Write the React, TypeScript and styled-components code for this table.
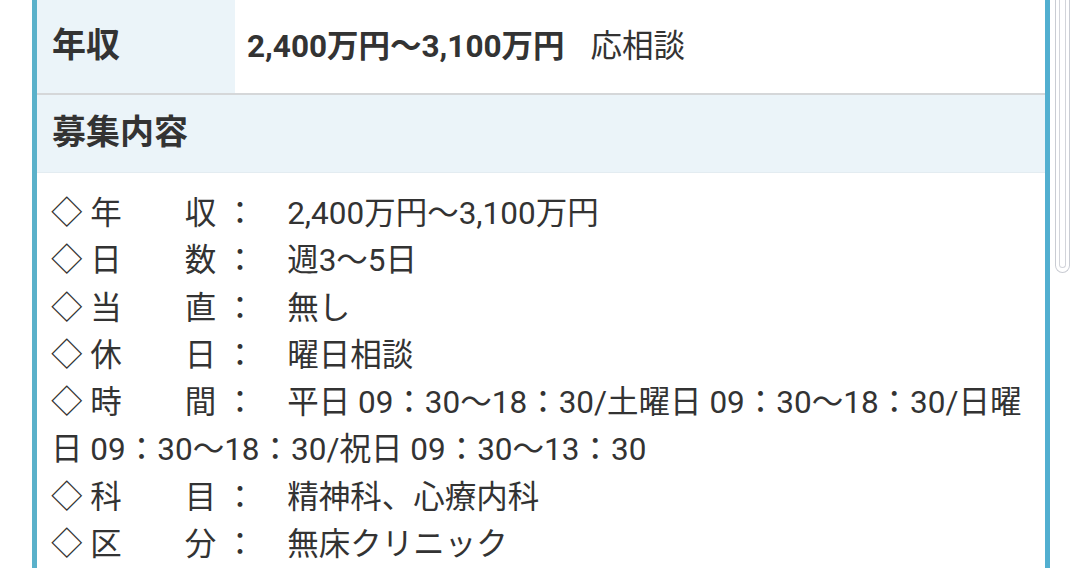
import React from "react";
import styled, { createGlobalStyle } from "styled-components";

const Global = createGlobalStyle`
  html, body { margin: 0; padding: 0; background: #ffffff; overflow: hidden; }
  body { font-family: Roboto, "Noto Sans CJK JP", sans-serif; color: #333333; }
`;

const Page = styled.div`
  position: relative;
  width: 1080px;
  height: 573px;
  overflow: hidden;
  padding-left: 32px;
  box-sizing: border-box;
`;

const Table = styled.div`
  width: 1018px;
  border-left: 5px solid #5ab1ca;
  border-right: 5px solid #52afd0;
  box-sizing: border-box;
  display: flex;
  flex-direction: column;
`;

const Row = styled.div<{ $h?: number; $line?: boolean }>`
  display: grid;
  grid-template-columns: 198px 1fr;
  border-bottom: ${(p) => (p.$line ? "2px solid #d5d7d9" : "none")};
  ${(p) => (p.$h ? `height: ${p.$h}px;` : "")}
`;

const Th = styled.div`
  background: #ebf4f9;
  font-weight: 700;
  font-size: 34px;
  line-height: 1.5;
  padding: 12px 15px 0;
  box-sizing: border-box;
`;

const Td = styled.div`
  background: #ffffff;
  font-size: 31.5px;
  line-height: 1.5;
  padding: 15px 12px 0;
  box-sizing: border-box;
  white-space: nowrap;
`;

const Strong = styled.span`
  font-weight: 700;
`;

const Note = styled.span`
  margin-left: 26px;
`;

const SectionHead = styled.div`
  background: #ebf4f9;
  font-weight: 700;
  font-size: 34px;
  line-height: 1.5;
  height: 78px;
  padding: 12px 15px 0;
  box-sizing: border-box;
  border-bottom: 1px solid #e3ecf1;
`;

const Body = styled.div`
  background: #ffffff;
  font-size: 31.5px;
  line-height: 47.3px;
  padding: 17px 14px 0 14px;
`;

const Line = styled.div``;

const Scroll = styled.div`
  position: absolute;
  top: -20px;
  left: 1055px;
  width: 15px;
  height: 293px;
  border: 1px solid #c9ccd3;
  border-top: none;
  border-radius: 0 0 8px 8px;
  box-sizing: border-box;
  padding: 0 3px 4px;
  display: flex;
`;

const ScrollInner = styled.div`
  flex: 1;
  border: 1px solid #d2d4da;
  border-top: none;
  border-radius: 0 0 5px 5px;
`;

const lines = [
  "◇ 年　　収 ：　2,400万円〜3,100万円",
  "◇ 日　　数 ：　週3〜5日",
  "◇ 当　　直 ：　無し",
  "◇ 休　　日 ：　曜日相談",
  "◇ 時　　間 ：　平日 09：30〜18：30/土曜日 09：30〜18：30/日曜日 09：30〜18：30/祝日 09：30〜13：30",
  "◇ 科　　目 ：　精神科、心療内科",
  "◇ 区　　分 ：　無床クリニック",
];

export default function App() {
  return (
    <>
      <Global />
      <Page lang="ja">
        <Table>
          <Row $h={6} $line>
            <Th />
            <Td />
          </Row>
          <Row $h={85} $line>
            <Th>年収</Th>
            <Td>
              <Strong>2,400万円〜3,100万円</Strong>
              <Note>応相談</Note>
            </Td>
          </Row>
          <SectionHead>募集内容</SectionHead>
          <Body>
            {lines.map((l, i) => (
              <Line key={i}>{l}</Line>
            ))}
          </Body>
        </Table>
        <Scroll>
          <ScrollInner />
        </Scroll>
      </Page>
    </>
  );
}
